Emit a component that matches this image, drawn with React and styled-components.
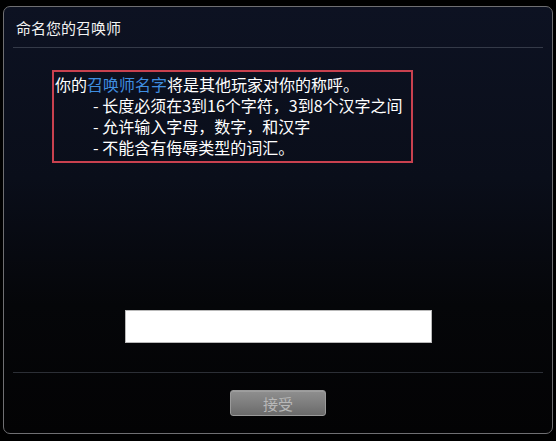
import React from "react";
import styled, { createGlobalStyle } from "styled-components";

const GlobalStyle = createGlobalStyle`
  html, body {
    margin: 0;
    padding: 0;
    background: #000;
  }
  body {
    font-family: "Noto Sans CJK SC", "Noto Sans", sans-serif;
  }
`;

const Page = styled.div`
  width: 556px;
  height: 441px;
  padding: 6px 3px 0 3px;
  box-sizing: border-box;
  background: #000;
`;

const Panel = styled.div`
  width: 550px;
  height: 428px;
  box-sizing: border-box;
  border: 1px solid #6f6f72;
  border-radius: 7px;
  background: linear-gradient(to bottom, #0d1222 0%, #0a0e1a 40%, #050609 70%, #030304 100%);
  display: flex;
  flex-direction: column;
`;

const Header = styled.div`
  height: 40px;
  display: flex;
  align-items: center;
  padding-left: 12px;
  color: #f2f2f2;
  font-size: 15px;
`;

const Divider = styled.div`
  height: 1px;
  margin: 0 9px;
  background: ${(p) => (p.$dim ? "#2c2f36" : "#343a48")};
`;

const Body = styled.div`
  flex: 1;
  display: flex;
  flex-direction: column;
  padding: 22px 0 29px;
`;

const Notice = styled.div`
  margin-left: 48px;
  width: 361px;
  height: 93px;
  box-sizing: border-box;
  border: 2px solid #c9414f;
  padding: 2px 0 0 1px;
  color: #fff;
  font-size: 16px;
  line-height: 21px;
`;

const Lead = styled.div``;

const Hi = styled.span`
  color: #3f8ee0;
`;

const Rule = styled.div`
  padding-left: 38px;
`;

const NameInput = styled.input`
  margin: auto auto 0;
  width: 307px;
  height: 33px;
  box-sizing: border-box;
  border: 1px solid #b9b9b9;
  background: #fff;
  outline: none;
`;

const Footer = styled.div`
  height: 60px;
  display: flex;
  align-items: center;
  justify-content: center;
`;

const AcceptButton = styled.button`
  width: 96px;
  height: 26px;
  border: 1px solid #9a9a9a;
  border-radius: 3px;
  background: linear-gradient(to bottom, #8f8f8f 0%, #7c7c7c 55%, #6a6a6a 100%);
  color: #b8b8b8;
  font-family: inherit;
  font-size: 15px;
  padding: 0;
  box-shadow: inset 0 1px 0 rgba(255, 255, 255, 0.15);
`;

export default function App() {
  return (
    <>
      <GlobalStyle />
      <Page>
        <Panel>
          <Header>命名您的召唤师</Header>
          <Divider />
          <Body>
            <Notice>
              <Lead>
                你的<Hi>召唤师名字</Hi>将是其他玩家对你的称呼。
              </Lead>
              <Rule>- 长度必须在3到16个字符，3到8个汉字之间</Rule>
              <Rule>- 允许输入字母，数字，和汉字</Rule>
              <Rule>- 不能含有侮辱类型的词汇。</Rule>
            </Notice>
            <NameInput type="text" />
          </Body>
          <Divider $dim />
          <Footer>
            <AcceptButton disabled>接受</AcceptButton>
          </Footer>
        </Panel>
      </Page>
    </>
  );
}
